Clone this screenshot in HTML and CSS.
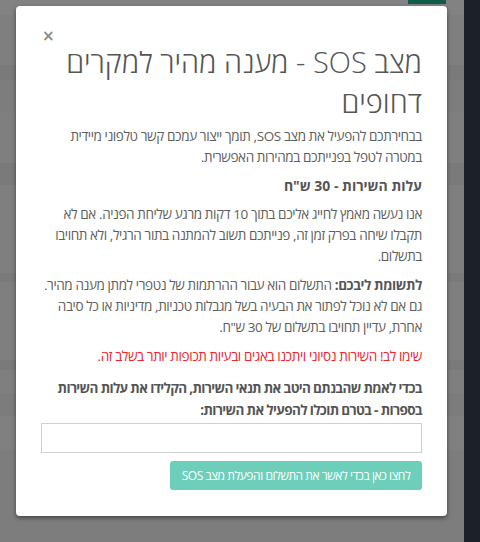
FILE: index.html
```html
<!DOCTYPE html>
<html lang="he">
<head>
<meta charset="utf-8">
<title>SOS</title>
<link rel="stylesheet" href="styles.css">
</head>
<body>
<div class="page">
  <div class="main">
    <div class="band band-top"><span class="top-btn"></span></div>
    <div class="band"></div>
    <div class="band band-dark"></div>
    <div class="band band-mid"></div>
    <div class="band band-light"></div>
    <div class="band band-dark2"></div>
    <div class="band band-light2"></div>
    <div class="band band-dark3"></div>
    <div class="band band-light3"></div>
    <div class="band band-dark4"></div>
    <div class="band band-dark5"></div>
    <div class="band band-light4"></div>
    <div class="band band-rest"></div>
  </div>
  <div class="sidebar"></div>
</div>

<div class="modal" dir="rtl">
  <button class="close" type="button">×</button>
  <h4 class="modal-title">מצב SOS - מענה מהיר למקרים דחופים</h4>
  <p class="first">בבחירתכם להפעיל את מצב SOS, תומך ייצור עמכם קשר טלפוני מיידית במטרה לטפל בפנייתכם במהירות האפשרית.</p>
  <p class="heading">עלות השירות - 30 ש"ח</p>
  <p>אנו נעשה מאמץ לחייג אליכם בתוך 10 דקות מרגע שליחת הפניה. אם לא תקבלו שיחה בפרק זמן זה, פנייתכם תשוב להמתנה בתור הרגיל, ולא תחויבו בתשלום.</p>
  <p><b>לתשומת ליבכם:</b> התשלום הוא עבור ההרתמות של נטפרי למתן מענה מהיר. גם אם לא נוכל לפתור את הבעיה בשל מגבלות טכניות, מדיניות או כל סיבה אחרת, עדיין תחויבו בתשלום של 30 ש"ח.</p>
  <p class="warn">שימו לב! השירות נסיוני ויתכנו באגים ובעיות תכופות יותר בשלב זה.</p>
  <p class="confirm">בכדי לאמת שהבנתם היטב את תנאי השירות, הקלידו את עלות השירות בספרות - בטרם תוכלו להפעיל את השירות:</p>
  <input class="field" type="text">
  <div class="actions">
    <button class="btn" type="button">לחצו כאן בכדי לאשר את התשלום והפעלת מצב SOS</button>
  </div>
</div>
</body>
</html>
```

FILE: styles.css
```css
html, body {
  margin: 0;
  padding: 0;
}
body {
  width: 480px;
  height: 542px;
  overflow: hidden;
  background: #7f7f7f;
  font-family: "Open Sans", "Liberation Sans", "DejaVu Sans", sans-serif;
  position: relative;
}
.page {
  display: flex;
  height: 542px;
}
.main {
  flex: 1;
  display: flex;
  flex-direction: column;
}
.sidebar {
  width: 16px;
  background: #1b2029;
}
.band { height: 50px; background: #7f7f7f; }
.band-top { height: 15px; background: #828282; position: relative; }
.top-btn {
  position: absolute;
  right: 18px;
  top: 0;
  width: 38px;
  height: 4px;
  background: #0f5c4a;
}
.band-dark { height: 15px; background: #7a7a7a; }
.band-mid { height: 33px; background: #7d7d7d; }
.band-light { height: 50px; background: #7f7f7f; }
.band-dark2 { height: 22px; background: #7a7a7a; }
.band-light2 { height: 88px; background: #7f7f7f; }
.band-dark3 { height: 9px; background: #7a7a7a; }
.band-light3 { height: 78px; background: #7f7f7f; }
.band-dark4 { height: 10px; background: #7a7a7a; }
.band-dark5 { height: 23px; background: #7c7c7c; margin-top: 23px; }
.band-light4 { height: 34px; background: #808080; }
.band-rest { flex: 1; background: #7d7d7d; }

.modal {
  position: absolute;
  left: 16px;
  top: 6px;
  width: 381px;
  padding: 36px 25px 26px;
  background: #fff;
  border-radius: 4px;
  box-shadow: 0 2px 4px rgba(0,0,0,0.45);
  color: #5e5e5e;
  font-size: 13.5px;
  letter-spacing: -0.4px;
  line-height: 21px;
}
.close {
  position: absolute;
  left: 26px;
  top: 23px;
  border: 0;
  background: none;
  padding: 0;
  font-family: "DejaVu Sans", sans-serif;
  font-size: 15px;
  line-height: 14px;
  font-weight: bold;
  color: #8a8a8a;
}
.modal-title {
  margin: 0 0 4px;
  font-size: 29px;
  line-height: 40px;
  font-weight: 300;
  letter-spacing: 0;
  color: #555;
}
p {
  margin: 0 0 8px;
}
.first {
  margin-top: 2px;
  margin-bottom: 7px;
}
.heading {
  font-weight: bold;
  font-size: 14px;
  letter-spacing: 0;
  color: #555;
}
b {
  color: #555;
}
.warn {
  color: #f2232a;
  margin-bottom: 10px;
}
.confirm {
  font-weight: bold;
  color: #555;
  letter-spacing: -0.65px;
  line-height: 22px;
  margin-bottom: 2px;
}
.field {
  display: block;
  box-sizing: border-box;
  width: 100%;
  height: 30px;
  margin: 0;
  border: 1px solid #cfcfcf;
  background: #fff;
}
.actions {
  display: flex;
  justify-content: flex-start;
  margin-top: 8px;
}
.btn {
  box-sizing: border-box;
  width: 252px;
  height: 29px;
  border: 0;
  border-radius: 3px;
  background: #6dcfb9;
  color: #fff;
  font-family: inherit;
  font-size: 12px;
  letter-spacing: -0.45px;
  white-space: nowrap;
  padding: 0 8px;
  text-align: center;
}
```
